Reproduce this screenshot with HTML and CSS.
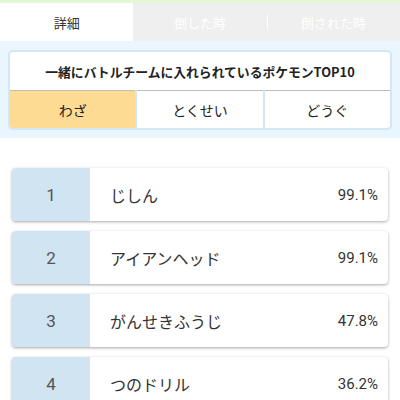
FILE: index.html
```html
<!DOCTYPE html>
<html lang="ja">
<head>
<meta charset="utf-8">
<link rel="stylesheet" href="styles.css">
</head>
<body>
<div class="topbar"></div>
<div class="tabs">
  <div class="tab active">詳細</div>
  <div class="tab">倒した時</div>
  <div class="tab sep">倒された時</div>
</div>
<div class="panel-wrap">
  <div class="panel">
    <div class="panel-title">一緒にバトルチームに入れられているポケモンTOP10</div>
    <div class="buttons">
      <div class="btn selected">わざ</div>
      <div class="btn">とくせい</div>
      <div class="btn">どうぐ</div>
    </div>
  </div>
</div>
<div class="list">
  <div class="card"><div class="rank">1</div><div class="name">じしん</div><div class="pct">99.1%</div></div>
  <div class="card"><div class="rank">2</div><div class="name">アイアンヘッド</div><div class="pct">99.1%</div></div>
  <div class="card"><div class="rank">3</div><div class="name">がんせきふうじ</div><div class="pct">47.8%</div></div>
  <div class="card"><div class="rank">4</div><div class="name">つのドリル</div><div class="pct">36.2%</div></div>
</div>
</body>
</html>
```
FILE: styles.css
```css
html, body {
  margin: 0;
  padding: 0;
  background: #ffffff;
  font-family: Roboto, "Noto Sans CJK JP", sans-serif;
  color: #333;
}
.topbar {
  height: 3px;
  background: #e1f8d4;
}
.tabs {
  display: flex;
  height: 38px;
}
.tab {
  flex: 1;
  display: flex;
  align-items: center;
  justify-content: center;
  background: #efefef;
  color: #ffffff;
  font-size: 13px;
  font-family: "Noto Sans CJK JP", sans-serif;
  position: relative;
}
.tab.active {
  background: #ffffff;
  color: #333;
}
.tab.sep::before {
  content: "";
  position: absolute;
  left: 0;
  top: 12px;
  height: 14px;
  width: 1px;
  background: #ffffff;
}
.panel-wrap {
  background: #eaf6fd;
  padding: 9px 8px 8px;
}
.panel {
  border: 2px solid #d2e6f3;
  border-radius: 5px;
  background: #d2e6f3;
  overflow: hidden;
}
.panel-title {
  height: 38px;
  background: #ffffff;
  display: flex;
  align-items: center;
  justify-content: center;
  font-family: "Noto Sans CJK JP", sans-serif;
  font-weight: 700;
  font-size: 12.8px;
  color: #222;
}
.buttons {
  display: grid;
  grid-template-columns: 1fr 1fr 1fr;
  column-gap: 2px;
}
.btn {
  height: 37px;
  border-top: 1px solid #bdbdbd;
  background: #ffffff;
  display: flex;
  align-items: center;
  justify-content: center;
  font-family: "Noto Sans CJK JP", sans-serif;
  font-size: 14px;
  color: #222;
}
.btn.selected {
  background: #fddb93;
}
.list {
  padding: 30px 12px 0;
  display: flex;
  flex-direction: column;
  gap: 10px;
}
.card {
  display: flex;
  height: 53px;
  background: #ffffff;
  border-radius: 4px;
  overflow: hidden;
  box-shadow: 0 1px 3px rgba(0, 0, 0, 0.35);
  align-items: stretch;
}
.rank {
  width: 78px;
  background: #d0e4f2;
  display: flex;
  align-items: center;
  justify-content: center;
  font-size: 17px;
  color: #555;
}
.name {
  flex: 1;
  display: flex;
  align-items: center;
  padding-left: 20px;
  font-family: "Noto Sans CJK JP", sans-serif;
  font-size: 16px;
  color: #333;
}
.pct {
  display: flex;
  align-items: center;
  padding-right: 10px;
  font-size: 15px;
  color: #333;
}
```
